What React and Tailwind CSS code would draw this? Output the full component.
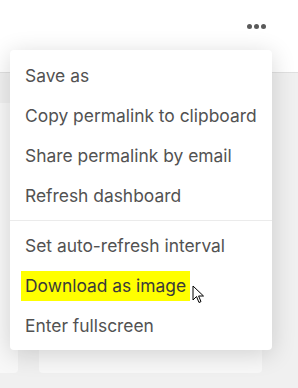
export default function App() {
  const items = [
    "Save as",
    "Copy permalink to clipboard",
    "Share permalink by email",
    "Refresh dashboard",
  ];
  return (
    <div
      className="relative w-[298px] h-[388px] overflow-hidden bg-[#f0f0f0]"
      style={{ fontFamily: "Inter, 'Noto Sans', sans-serif" }}
    >
      {/* header */}
      <div className="h-[73px] bg-white border-b border-[#e0e0e0] flex justify-end items-start pt-[24px] pr-[32px]">
        <div className="flex gap-[2px]">
          <span className="w-[5px] h-[5px] rounded-full bg-[#5a5a5a]" />
          <span className="w-[5px] h-[5px] rounded-full bg-[#5a5a5a]" />
          <span className="w-[5px] h-[5px] rounded-full bg-[#5a5a5a]" />
        </div>
      </div>
      {/* cards */}
      <div className="flex gap-[21px] pt-[30px] ml-[-10px]">
        <div className="w-[28px] h-[270px] rounded-[4px] bg-[#f8f8f8]" />
        <div className="w-[223px] h-[270px] rounded-[4px] bg-[#f8f8f8]" />
      </div>

      {/* menu */}
      <div className="absolute left-[10px] top-[50px] w-[262px] bg-white rounded-[4px] pt-[6px] pb-[4px] shadow-[0_4px_24px_rgba(0,0,0,0.16)] text-[17.4px] text-[#525252]">
        {items.map((t) => (
          <div key={t} className="h-[40px] flex items-center px-[15px]">
            {t}
          </div>
        ))}
        <div className="mt-[4px] mb-[5px] h-px bg-[#ebebeb]" />
        <div className="h-[40px] flex items-center px-[15px]">
          Set auto-refresh interval
        </div>
        <div className="h-[40px] flex items-center px-[11px]">
          <span className="bg-[#ffff00] px-[4px] py-[2px] text-[#3a3a3a]">
            Download as image
          </span>
          <svg
            width="13"
            height="19"
            viewBox="0 0 13 19"
            className="ml-[2px] mt-[16px]"
          >
            <path
              d="M1 1 L1 15 L4.5 11.5 L7 17.5 L9 16.6 L6.6 11 L11.5 11 Z"
              fill="white"
              stroke="black"
              strokeWidth="1"
              strokeLinejoin="round"
            />
          </svg>
        </div>
        <div className="h-[40px] flex items-center px-[15px]">
          Enter fullscreen
        </div>
      </div>
    </div>
  );
}
